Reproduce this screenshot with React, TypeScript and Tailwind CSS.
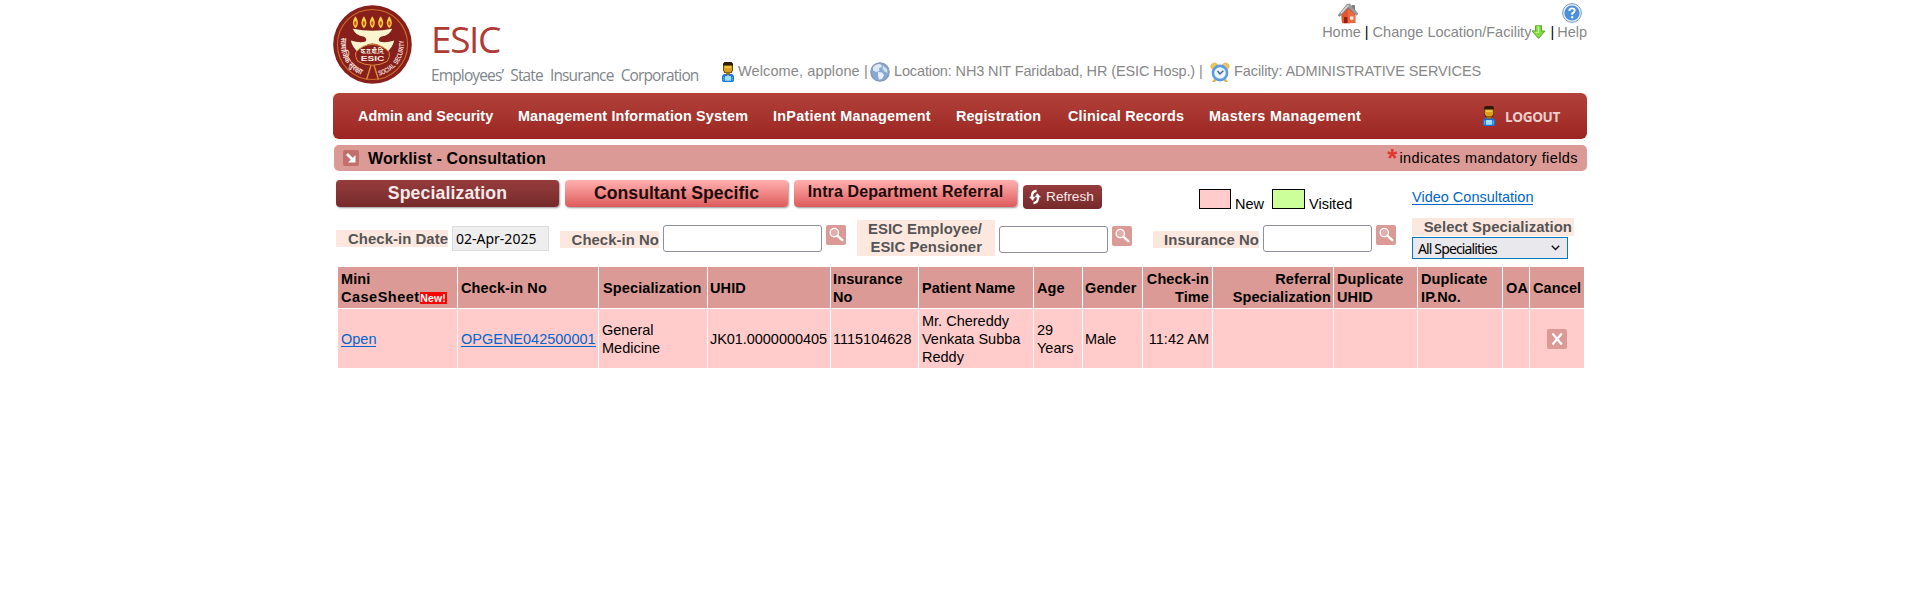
import React from "react";

const LAMPS = [22.7, 31.3, 39.8, 48.3, 57];

function Emblem() {
  return (
    <svg width="79" height="79" viewBox="0 0 80 80" className="block shrink-0">
      <circle cx="40" cy="40" r="39.8" fill="#871f1b" />
      <circle cx="40" cy="40" r="35.5" fill="none" stroke="#cf6f2a" strokeWidth="1.1" />
      {LAMPS.map((x) => (
        <g key={x} transform={`translate(${x} 18.5)`}>
          <path d="M0 -7 C3.4 -2 3.4 2 0 5 C-3.4 2 -3.4 -2 0 -7Z" fill="#f7cf3e" />
          <ellipse cx="0" cy="0" rx="1.1" ry="2.2" fill="#cf4a14" />
        </g>
      ))}
      <path d="M20 24 Q40 28 60 24 Q57 31 49 32 Q45 34 47 37 Q53 39 62 36 Q60 44 54 48 Q48 39 40 39 Q32 39 26 48 Q20 44 18 36 Q27 39 33 37 Q35 34 31 32 Q23 31 20 24Z" fill="#fbf5cf" />
      <path d="M23 48 Q30 40 40 40 Q50 40 57 48 Q58 52 55 57 Q48 61 40 61 Q32 61 25 57 Q22 52 23 48Z" fill="#871f1b" stroke="#e08a3a" strokeWidth="1" />
      <text x="40" y="49.5" textAnchor="middle" fontSize="7.5" fontWeight="bold" fill="#f6e9df" fontFamily="Noto Sans, sans-serif" textLength="24" lengthAdjust="spacingAndGlyphs">क.रा.बी.नि.</text>
      <text x="40" y="56.5" textAnchor="middle" fontSize="7.8" fontWeight="bold" fill="#f6e9df" fontFamily="Liberation Sans, sans-serif" textLength="24" lengthAdjust="spacingAndGlyphs">ESIC</text>
      <path d="M38.5 61 L34 75.5 M41.5 61 L46 75.5" stroke="#e08a3a" strokeWidth="1.4" />
      <path id="ringRight" d="M46.5 71.5 A32 32 0 0 0 71 33" fill="none" />
      <path id="ringLeft" d="M8.5 33 A32.5 32.5 0 0 0 34 72" fill="none" />
      <text fontSize="7.2" fontWeight="bold" fill="#f2d9cf" fontFamily="Liberation Sans, sans-serif">
        <textPath href="#ringRight" textLength="48" lengthAdjust="spacingAndGlyphs">SOCIAL SECURITY</textPath>
      </text>
      <text fontSize="8.2" fontWeight="bold" fill="#f2d9cf" fontFamily="Noto Sans, sans-serif">
        <textPath href="#ringLeft" textLength="46" lengthAdjust="spacingAndGlyphs">सामाजिक सुरक्षा</textPath>
      </text>
    </svg>
  );
}

function Person() {
  return (
    <svg width="12" height="20" viewBox="0 0 12 20" className="block shrink-0">
      <path d="M1 1.5 L2.5 0 H9.5 L11 1.5 V8 L9.5 11 H2.5 L1 8Z" fill="#2b1a05" />
      <path d="M1.6 3.4 H10.4 V8 L8.8 10.5 H3.2 L1.6 8Z" fill="#dd9f1b" />
      <path d="M3 4.4 H9 V6 H3Z" fill="#f5c84a" />
      <path d="M4 10.5 H8 V13 H4Z" fill="#a36a0c" />
      <path d="M2 12 H4 L6 14 L8 12 H10 L12 14 V18.5 L11 20 H1 L0 18.5 V14Z" fill="#1672d4" />
      <path d="M3 14 H9 V18.8 H3Z" fill="#9fdcff" />
      <path d="M1 14.5 H2.4 V18.5 H1Z M9.6 14.5 H11 V18.5 H9.6Z" fill="#4fa8f2" />
    </svg>
  );
}

function Globe() {
  return (
    <svg width="20" height="20" viewBox="0 0 20 20" className="block shrink-0">
      <circle cx="10" cy="10" r="9.2" fill="#86a8d3" stroke="#8b97ab" strokeWidth="1.2" />
      <path d="M3 5 Q7 1 11 2.5 L12 5 L9 6 L9.5 9 L6 10 L3 8.5Z" fill="#dce8f6" />
      <path d="M8 10 L12 10.5 L14 13 L12 17 L9 17.5 L8 13.5Z" fill="#e8f0fa" />
      <path d="M13 3.5 L17 7 L17.5 11 L14.5 9.5 L12.5 7Z" fill="#cfdff2" />
    </svg>
  );
}

function Clock() {
  return (
    <svg width="20" height="21" viewBox="0 0 20 21" className="block shrink-0">
      <path d="M0.8 5.5 Q0.5 1 5.5 1 L7.5 2.5 L2.5 7Z M19.2 5.5 Q19.5 1 14.5 1 L12.5 2.5 L17.5 7Z" fill="#f0c65a" stroke="#d9a02e" strokeWidth="0.6" />
      <path d="M4 17 L2 20 H5 L6.5 18Z M16 17 L18 20 H15 L13.5 18Z" fill="#e9b23f" />
      <circle cx="10" cy="11" r="8.4" fill="#5b9de0" />
      <circle cx="10" cy="11" r="5.8" fill="#eef5fc" />
      <path d="M7.5 9 L10 12 L13.3 8.8" fill="none" stroke="#35679f" strokeWidth="1.4" />
    </svg>
  );
}

function House() {
  return (
    <svg width="20" height="21" viewBox="0 0 20 21" className="block shrink-0">
      <path d="M3 10 L10 4 L17.5 10 V20 L4 20.3Z" fill="#e2562f" />
      <path d="M10 6 L17 12 V19.5 L10 20.4Z" fill="#ee6a45" />
      <path d="M14 2 H17 V8 L14 6Z" fill="#85807e" />
      <path d="M0 12.4 L9 1.2 L12 1.2 L20 10.8 L18.4 12.2 L10.3 4.8 L2 13.2Z" fill="#9b9b9b" stroke="#777" strokeWidth="0.6" />
      <path d="M3 10.4 L9.3 3 L11 3" fill="none" stroke="#e3e3e3" strokeWidth="1.2" />
      <path d="M6 14 H9.5 V20.2 H6Z" fill="#8d2010" />
      <path d="M12 13.5 H15.4 V16.6 H12Z" fill="#fbe9e0" />
    </svg>
  );
}

function HelpBadge() {
  return (
    <svg width="20" height="20" viewBox="0 0 20 20" className="block shrink-0">
      <circle cx="10" cy="10" r="9.4" fill="#e4edf7" stroke="#7d9cc4" strokeWidth="1" />
      <circle cx="10" cy="10" r="7.6" fill="#4a90da" />
      <path d="M7.3 8 Q7.4 5.4 10 5.4 Q12.7 5.4 12.7 7.7 Q12.7 9.2 10.2 10.4 V11.8" fill="none" stroke="#fff" strokeWidth="1.9" />
      <circle cx="10.2" cy="14.3" r="1.2" fill="#fff" />
    </svg>
  );
}

function DownArrow() {
  return (
    <svg width="15" height="14" viewBox="0 0 15 14" className="block shrink-0">
      <path d="M4.5 0.8 H10.5 V6 H14 L7.5 13.4 L1 6 H4.5Z" fill="#86d845" stroke="#55ab22" strokeWidth="1" strokeLinejoin="round" />
      <path d="M6 2 H7.5 V7.5 H4.5" fill="none" stroke="#c3f59a" strokeWidth="1.2" />
    </svg>
  );
}

function SearchButton({ className = "" }: { className?: string }) {
  return (
    <button className={`block size-5 shrink-0 ${className}`} aria-label="Search">
      <svg width="20" height="20" viewBox="0 0 20 20" className="block">
        <rect width="20" height="20" rx="2" fill="#db9a95" />
        <circle cx="8.3" cy="7.6" r="4.2" fill="#e3aeaa" stroke="#fff" strokeWidth="1.3" />
        <path d="M11.5 10.8 L16.3 15.2" stroke="#fff" strokeWidth="2.4" strokeLinecap="round" />
      </svg>
    </button>
  );
}

const NAV = [
  { label: "Admin and Security", w: "w-[160px]" },
  { label: "Management Information System", w: "w-[255px] tracking-[0.13px]" },
  { label: "InPatient Management", w: "w-[183px] tracking-[0.25px]" },
  { label: "Registration", w: "w-[112px] tracking-[0.1px]" },
  { label: "Clinical Records", w: "w-[141px] tracking-[0.22px]" },
  { label: "Masters Management", w: "w-[274px] tracking-[0.32px]" },
];

const HEAD = "flex h-[41px] items-center bg-[#db9a95] font-bold tracking-[0.12px]";
const CELL = "flex h-[59px] items-center bg-[#ffcccb]";
const LABEL = "shrink-0 bg-[#fde8e0] text-right text-[14.9px] font-bold tracking-[0.05px] text-[#555]";
const FIELD = "h-[27px] shrink-0 rounded-[3px] border border-[#8f8f9d] bg-white";
const TAB = "flex h-[27px] w-[223px] shrink-0 items-center justify-center rounded-[4px] pb-[1px] font-bold shadow-[1px_1px_2px_rgba(0,0,0,0.4)]";

export default function App() {
  return (
    <div className="min-h-[601px] w-full bg-white font-['Liberation_Sans',Arial,sans-serif] text-[14.5px] leading-[18px] whitespace-nowrap text-black">
      <div className="mx-auto w-[1254px]">
        <header className="flex h-[93px]">
          <div className="flex w-[389px] shrink-0 pt-[5px]">
            <Emblem />
            <div className="pl-[19px] font-['Open_Sans',sans-serif]">
              <div className="mt-[15px] h-[38px] text-[37px] leading-[38px] tracking-[-1.4px] text-[#b03a35]">ESIC</div>
              <div className="mt-[7px] text-[15.5px] leading-[20px] tracking-[-0.87px] [word-spacing:4px] text-[#808589]">Employees’ State Insurance Corporation</div>
            </div>
          </div>
          <div className="flex-1 text-[#888]">
            <div className="flex h-[23px] justify-end gap-[204px] pt-[3px] pr-[5px]">
              <House />
              <HelpBadge />
            </div>
            <div className="flex h-[18px] items-center justify-end">
              <a>Home</a>
              <span className="px-[4px] text-black">|</span>
              <a>Change Location/Facility</a>
              <DownArrow />
              <span className="pr-[3px] pl-[4px] text-black">|</span>
              <a>Help</a>
            </div>
            <div className="mt-[21px] flex h-[20px] items-center">
              <Person />
              <span className="ml-[4px] w-[132px] -translate-y-px tracking-[0.12px]">Welcome, applone |</span>
              <Globe />
              <span className="ml-[4px] w-[316px] -translate-y-px tracking-[-0.13px]">Location: NH3 NIT Faridabad, HR (ESIC Hosp.) |</span>
              <Clock />
              <span className="ml-[4px] -translate-y-px tracking-[-0.09px]">Facility: ADMINISTRATIVE SERVICES</span>
            </div>
          </div>
        </header>

        <nav className="flex h-[46px] items-center rounded-[6px] bg-linear-to-b from-[#b2413a] to-[#9b2522] pl-[25px] text-[14.4px] font-bold text-white">
          {NAV.map((n) => (
            <a key={n.label} className={`shrink-0 ${n.w}`}>{n.label}</a>
          ))}
          <span className="flex items-center gap-[10px] font-['Open_Sans',sans-serif] text-[13.6px] font-bold tracking-[-0.4px] text-[#efd0cd]">
            <Person />
            <span className="translate-y-px">LOGOUT</span>
          </span>
        </nav>

        <div className="mt-[6px] ml-[1px] flex h-[26px] items-center rounded-[5px] bg-[#db9a95] pr-[9px] pl-[9px]">
          <svg width="16" height="16" viewBox="0 0 16 16" className="block">
            <rect width="16" height="16" rx="2" fill="#c1706b" />
            <path d="M4 4 L10 10" stroke="#fff" strokeWidth="2.6" />
            <path d="M12.5 5 V12.5 H5Z" fill="#fff" />
          </svg>
          <h1 className="ml-[9px] flex-1 translate-y-px text-[16px] font-bold tracking-[0.14px]">Worklist - Consultation</h1>
          <span className="mr-[2px] h-[26px] text-[26px] leading-[27px] font-bold text-[#e0382f]">*</span>
          <span className="text-[14.5px] tracking-[0.42px]">indicates mandatory fields</span>
        </div>

        <div className="mt-[9px] flex h-[38px] items-start pl-[3px]">
          <button className={`${TAB} bg-linear-to-b from-[#963c3d] to-[#762a2b] text-[17.7px] tracking-[0.1px] text-[#f7e9e9]`}>Specialization</button>
          <button className={`${TAB} ml-[6px] bg-linear-to-b from-[#ffb0b0] to-[#dd5a5c] text-[17.7px] text-[#1c0b0b]`}>Consultant Specific</button>
          <button className={`${TAB} ml-[6px] bg-linear-to-b from-[#ffb0b0] to-[#dd5a5c] pb-[3px] text-[16px] tracking-[0.1px] text-[#1c0b0b]`}>Intra Department Referral</button>
          <button className="mt-[5px] ml-[6px] flex h-[24px] w-[79px] items-center rounded-[4px] bg-linear-to-b from-[#963c3d] to-[#762a2b] pl-[6px] text-[13.7px] text-[#f7e9e9]">
            <svg width="12" height="16" viewBox="0 0 12 16" className="mr-[5px] block" fill="none" stroke="#fff">
              <path d="M7.5 1.8 Q3 2.6 3 7 V8.5" strokeWidth="2.4" />
              <path d="M0.5 8 H5.8 L3.8 11.5Z" fill="#fff" strokeWidth="0.5" />
              <path d="M4.5 14.2 Q9 13.4 9 9 V7.5" strokeWidth="2.4" />
              <path d="M6.2 8 H11.5 L8.2 4.5Z" fill="#fff" strokeWidth="0.5" />
            </svg>
            Refresh
          </button>
          <div className="mt-[9px] ml-[97px] flex w-[213px]">
            <span className="h-[20px] w-[32px] border border-black bg-[#ffcccb]" />
            <span className="mt-[6px] ml-[4px] w-[37px]">New</span>
            <span className="h-[20px] w-[33px] border border-black bg-[#ccff99]" />
            <span className="mt-[6px] ml-[4px]">Visited</span>
          </div>
          <a className="mt-[8px] h-[17px] border-b border-[#0066cc] leading-[18px] text-[#0066cc]">Video Consultation</a>
        </div>

        <div className="flex h-[49px] items-start pl-[3px]">
          <label className={`${LABEL} mt-[12px] h-[17px] w-[112px] leading-[18px]`}>Check-in Date</label>
          <div className="mt-[8px] ml-[4px] h-[25px] w-[97px] border border-[#ddd] bg-[#eee] pl-[3px] font-['Noto_Sans',sans-serif] text-[14px] leading-[23px]">02-Apr-2025</div>
          <label className={`${LABEL} mt-[13px] ml-[11px] h-[17px] w-[99px] leading-[18px]`}>Check-in No</label>
          <input className={`${FIELD} mt-[7px] ml-[4px] w-[159px]`} />
          <SearchButton className="mt-[7px] ml-[4px]" />
          <label className={`${LABEL} mt-[2px] ml-[11px] h-[36px] w-[138px] pr-[13px]`}>
            ESIC Employee/
            <br />
            ESIC Pensioner
          </label>
          <input className={`${FIELD} mt-[8px] ml-[4px] w-[109px]`} />
          <SearchButton className="mt-[8px] ml-[4px]" />
          <label className={`${LABEL} mt-[13px] ml-[21px] h-[17px] w-[106px] leading-[18px]`}>Insurance No</label>
          <input className={`${FIELD} mt-[7px] ml-[4px] w-[109px]`} />
          <SearchButton className="mt-[7px] ml-[4px]" />
          <div className="ml-[16px]">
            <label className={`${LABEL} block h-[18px] w-[162px] pr-[2px] leading-[18px]`}>Select Specialization</label>
            <div className="mt-[1px] flex h-[22px] w-[156px] items-center justify-between border border-[#0a76bd] bg-[#e9e9ed] pr-[7px] pl-[5px] font-['Noto_Sans',sans-serif] text-[14px] tracking-[-0.87px]">
              <span className="translate-y-px">All Specialities</span>
              <svg width="9" height="6" viewBox="0 0 9 6" fill="none" stroke="#111" strokeWidth="1.4">
                <path d="M0.8 0.8 L4.5 4.5 L8.2 0.8" />
              </svg>
            </div>
          </div>
        </div>

        <div className="ml-[5px] grid w-[1246px] grid-cols-[119px_140px_108px_122px_87px_114px_48px_59px_69px_120px_83px_84px_26px_54px] gap-px">
          <div className={`${HEAD} pl-[3px]`}>
            <div>
              Mini
              <div className="flex">
                <span className="tracking-[0.5px]">CaseSheet</span>
                <span className="mt-[4px] h-[12px] w-[27px] bg-[#f00] text-center text-[10.5px] leading-[12px] text-white">New!</span>
              </div>
            </div>
          </div>
          <div className={`${HEAD} pl-[3px]`}>Check-in No</div>
          <div className={`${HEAD} pl-[4px]`}>Specialization</div>
          <div className={`${HEAD} pl-[2px]`}>UHID</div>
          <div className={`${HEAD} pl-[2px]`}>Insurance<br />No</div>
          <div className={`${HEAD} pl-[3px]`}>Patient Name</div>
          <div className={`${HEAD} pl-[3px]`}>Age</div>
          <div className={`${HEAD} pl-[2px]`}>Gender</div>
          <div className={`${HEAD} justify-end pr-[3px] text-right`}>Check-in<br />Time</div>
          <div className={`${HEAD} justify-end pr-[2px] text-right`}>Referral<br />Specialization</div>
          <div className={`${HEAD} pl-[3px]`}>Duplicate<br />UHID</div>
          <div className={`${HEAD} pl-[3px]`}>Duplicate<br />IP.No.</div>
          <div className={`${HEAD} pl-[3px]`}>OA</div>
          <div className={`${HEAD} pl-[3px]`}>Cancel</div>

          <div className={`${CELL} pl-[3px]`}>
            <a className="h-[17px] border-b border-[#0066cc] text-[#0066cc]">Open</a>
          </div>
          <div className={`${CELL} pl-[3px]`}>
            <a className="h-[17px] border-b border-[#0066cc] text-[#0066cc]">OPGENE042500001</a>
          </div>
          <div className={`${CELL} pl-[3px]`}>General<br />Medicine</div>
          <div className={`${CELL} pl-[2px] tracking-[-0.05px]`}>JK01.0000000405</div>
          <div className={`${CELL} pl-[2px]`}>1115104628</div>
          <div className={`${CELL} pl-[3px]`}>Mr. Chereddy<br />Venkata Subba<br />Reddy</div>
          <div className={`${CELL} pl-[3px]`}>29<br />Years</div>
          <div className={`${CELL} pl-[2px]`}>Male</div>
          <div className={`${CELL} justify-end pr-[3px]`}>11:42 AM</div>
          <div className={CELL} />
          <div className={CELL} />
          <div className={CELL} />
          <div className={CELL} />
          <div className={`${CELL} justify-center`}>
            <svg width="20" height="20" viewBox="0 0 20 20" className="block">
              <rect width="20" height="20" rx="2" fill="#db9a95" />
              <path d="M5.5 4.5 L14.8 15.5 M14.8 4.5 L5.5 15.5" stroke="#fff" strokeWidth="2.2" />
            </svg>
          </div>
        </div>
      </div>
    </div>
  );
}
